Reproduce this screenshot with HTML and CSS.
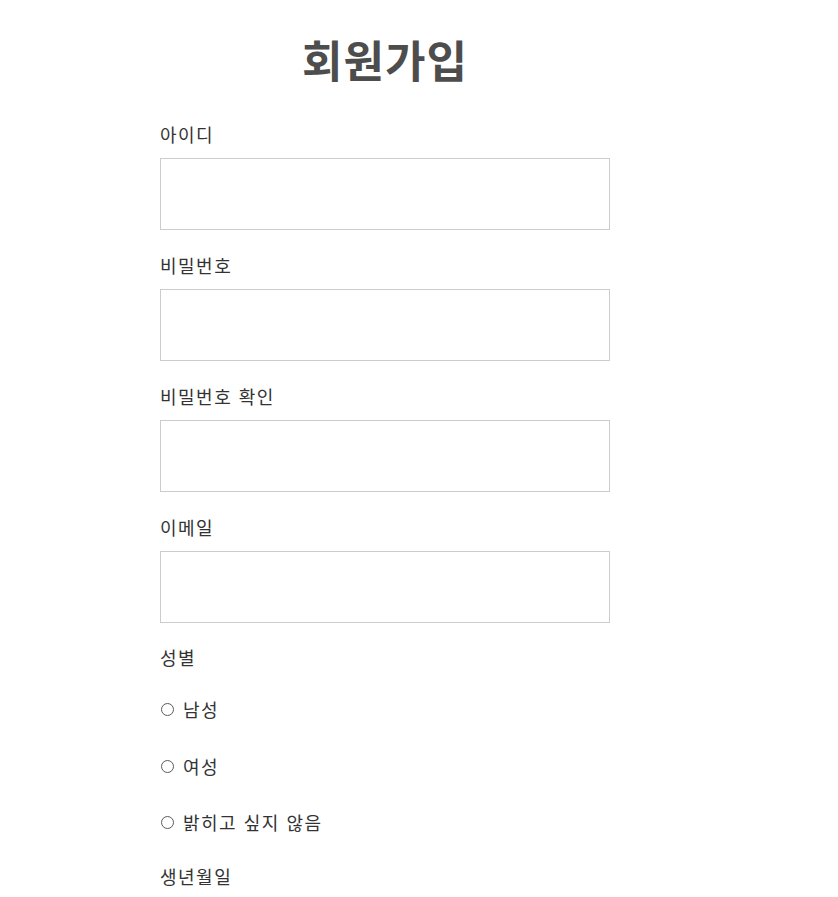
FILE: index.html
```html
<!DOCTYPE html>
<html lang="ko">
<head>
<meta charset="utf-8">
<title>회원가입</title>
<link rel="stylesheet" href="styles.css">
</head>
<body>
<main class="signup">
  <h1 class="signup-title">회원가입</h1>
  <form class="signup-form">
    <div class="field">
      <label class="field-label" for="uid">아이디</label>
      <input class="field-input" id="uid" type="text">
    </div>
    <div class="field">
      <label class="field-label" for="pw">비밀번호</label>
      <input class="field-input" id="pw" type="password">
    </div>
    <div class="field">
      <label class="field-label" for="pw2">비밀번호 확인</label>
      <input class="field-input" id="pw2" type="password">
    </div>
    <div class="field">
      <label class="field-label" for="email">이메일</label>
      <input class="field-input" id="email" type="email">
    </div>
    <div class="field field-gender">
      <span class="field-label">성별</span>
      <div class="radio-list">
        <label class="radio-row"><span class="radio-mark"></span>남성</label>
        <label class="radio-row"><span class="radio-mark"></span>여성</label>
        <label class="radio-row"><span class="radio-mark"></span>밝히고 싶지 않음</label>
      </div>
    </div>
    <div class="field">
      <span class="field-label">생년월일</span>
    </div>
  </form>
</main>
</body>
</html>
```
FILE: styles.css
```css
html, body {
  margin: 0;
  padding: 0;
  background: #ffffff;
}

body {
  font-family: "Noto Sans CJK KR", "Noto Sans", sans-serif;
  color: #333333;
}

.signup {
  width: 450px;
  margin-left: 160px;
}

.signup-title {
  margin: 29px 0 0;
  font-size: 44px;
  line-height: 60px;
  font-weight: 700;
  letter-spacing: 1px;
  color: #4d4d4d;
  text-align: center;
}

.signup-form {
  margin-top: 33px;
  display: flex;
  flex-direction: column;
}

.field {
  display: flex;
  flex-direction: column;
  margin-bottom: 23px;
}

.field-gender {
  margin-top: -1px;
  margin-bottom: 30px;
}

.field-label {
  font-size: 18px;
  line-height: 24px;
  letter-spacing: 1.5px;
  color: #333333;
}

.field-input {
  margin-top: 12px;
  box-sizing: border-box;
  width: 450px;
  height: 72px;
  border: 1px solid #cccccc;
  border-radius: 0;
  padding: 0 12px;
  font-size: 18px;
  outline: none;
  background: #ffffff;
}

.radio-list {
  margin-top: 28px;
  display: flex;
  flex-direction: column;
  gap: 32.5px;
}

.radio-row {
  display: flex;
  align-items: center;
  font-size: 18px;
  line-height: 24px;
  letter-spacing: 1.5px;
  color: #333333;
}

.radio-mark {
  box-sizing: border-box;
  width: 13px;
  height: 13px;
  border: 1px solid #5a5a5a;
  border-radius: 50%;
  margin-left: 1px;
  margin-right: 9px;
  margin-top: 1px;
}
```
